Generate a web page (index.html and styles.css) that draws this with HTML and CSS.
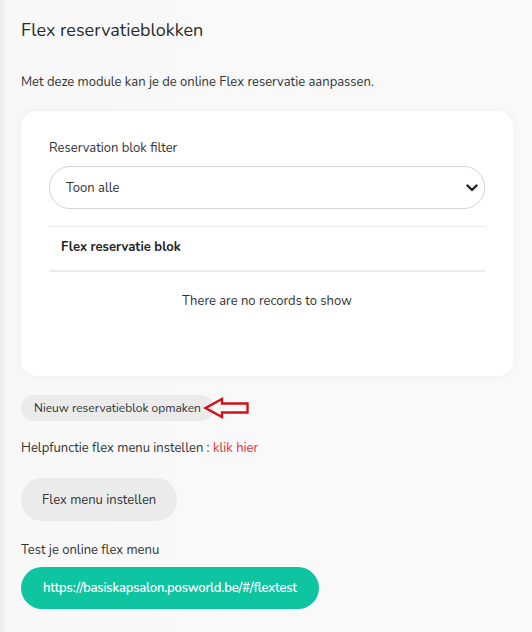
FILE: index.html
```html
<!DOCTYPE html>
<html lang="nl">
<head>
<meta charset="utf-8">
<title>Flex reservatieblokken</title>
<link rel="stylesheet" href="styles.css">
</head>
<body>
<div class="page">
  <h1 class="title">Flex reservatieblokken</h1>
  <p class="intro">Met deze module kan je de online Flex reservatie aanpassen.</p>

  <section class="card">
    <label class="label" for="filter">Reservation blok filter</label>
    <div class="select-wrap">
      <select id="filter" class="select">
        <option>Toon alle</option>
      </select>
      <svg class="chevron" width="12" height="8" viewBox="0 0 12 8"><path d="M1.5 1.5 L6 6 L10.5 1.5" fill="none" stroke="#222" stroke-width="2.4" stroke-linecap="round" stroke-linejoin="round"/></svg>
    </div>
    <div class="table">
      <div class="thead">Flex reservatie blok</div>
      <div class="empty">There are no records to show</div>
    </div>
  </section>

  <div class="new-row">
    <button class="btn btn-small">Nieuw reservatieblok opmaken</button>
    <svg class="arrow" width="47" height="22" viewBox="0 0 47 22"><path d="M2.5 11 L19 2 L19 6.5 L44.5 6.5 L44.5 15.5 L19 15.5 L19 20 Z" fill="none" stroke="#d0111b" stroke-width="2.4" stroke-linejoin="miter"/></svg>
  </div>

  <p class="help">Helpfunctie flex menu instellen : <a class="link" href="#">klik hier</a></p>

  <button class="btn btn-large">Flex menu instellen</button>

  <p class="test">Test je online flex menu</p>

  <a class="btn-green" href="#">https://basiskapsalon.posworld.be/#/flextest</a>
</div>
</body>
</html>
```
FILE: styles.css
```css
html, body {
  margin: 0;
  padding: 0;
}
body {
  background: linear-gradient(to right, #ececec 0px, #f8f8f8 8px, #f9f9f9 100%);
  font-family: "Nunito", "Lato", "Open Sans", sans-serif;
  color: #333;
  height: 632px;
  overflow: hidden;
}
.page {
  padding: 17px 19px 0 21px;
  display: flex;
  flex-direction: column;
  align-items: flex-start;
}
.title {
  font-size: 18px;
  font-weight: 400;
  margin: 0;
  line-height: 26px;
  color: #2a2a2a;
}
.intro {
  font-size: 13px;
  margin: 30px 0 0;
  line-height: 18px;
}
.card {
  align-self: stretch;
  margin-top: 20px;
  background: #fff;
  border-radius: 15px;
  box-shadow: 0 0 10px rgba(0,0,0,0.05);
  padding: 28px 28px 0;
  height: 265px;
  box-sizing: border-box;
  display: flex;
  flex-direction: column;
}
.label {
  font-size: 13px;
  line-height: 18px;
  color: #333;
}
.select-wrap {
  position: relative;
  margin-top: 9px;
}
.select {
  appearance: none;
  -webkit-appearance: none;
  width: 100%;
  height: 43px;
  border: 1px solid #d4d4d4;
  border-radius: 21px;
  background: #fff;
  font-family: inherit;
  font-size: 13px;
  color: #333;
  padding: 0 16px;
  outline: none;
}
.chevron {
  position: absolute;
  right: 7px;
  top: 18px;
}
.table {
  margin-top: 17px;
  display: flex;
  flex-direction: column;
}
.thead {
  border-top: 1px solid #ececec;
  border-bottom: 2px solid #ececec;
  padding: 0 12px;
  height: 43px;
  line-height: 41px;
  font-size: 13px;
  font-weight: 700;
  color: #222;
}
.empty {
  text-align: center;
  font-size: 13px;
  line-height: 18px;
  margin-top: 20px;
  color: #333;
}
.new-row {
  margin-top: 19px;
  display: flex;
  align-items: center;
}
.btn {
  border: none;
  background: #ebebeb;
  font-family: inherit;
  color: #333;
  cursor: pointer;
}
.btn-small {
  font-size: 12px;
  height: 26px;
  padding: 0 13px 0 13px;
  border-radius: 13px;
}
.arrow {
  margin-left: -11px;
}
.help {
  font-size: 13px;
  line-height: 18px;
  margin: 18px 0 0;
}
.link {
  color: #e0323a;
  text-decoration: none;
}
.btn-large {
  margin-top: 21px;
  font-size: 13px;
  height: 43px;
  padding: 0 21px;
  border-radius: 21px;
}
.test {
  font-size: 13px;
  line-height: 18px;
  margin: 20px 0 0;
}
.btn-green {
  margin-top: 8px;
  display: inline-flex;
  align-items: center;
  height: 42px;
  padding: 0 22px;
  border-radius: 21px;
  background: #0ec4a1;
  color: #fff;
  font-size: 13px;
  font-weight: 600;
  letter-spacing: -0.2px;
  text-decoration: none;
}
```
